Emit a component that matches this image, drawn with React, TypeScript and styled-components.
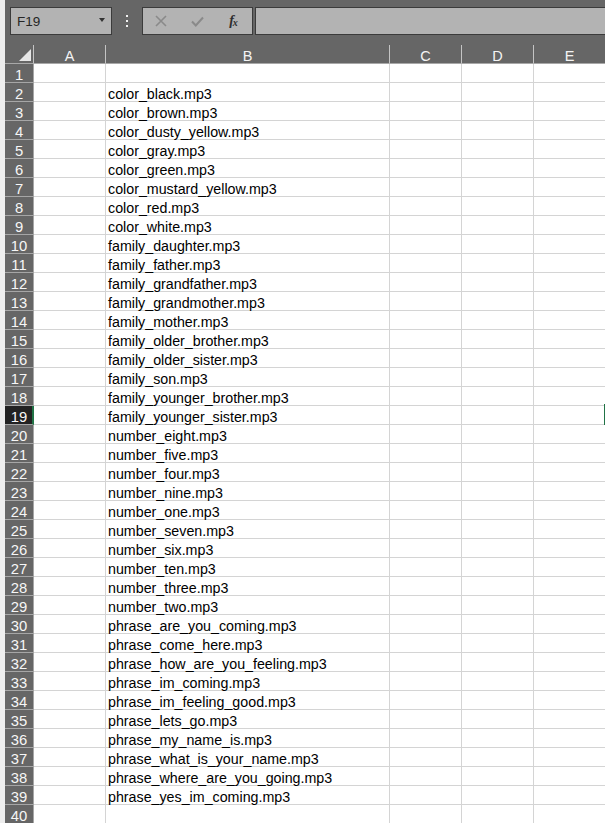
import React from "react";
import styled, { createGlobalStyle, css } from "styled-components";

const GlobalStyle = createGlobalStyle`
  html, body { margin: 0; padding: 0; background: #ffffff; }
  body { overflow: hidden; font-family: "Liberation Sans", Arial, sans-serif; }
`;

const COLS = "29px 72px 284px 72px 72px 72px";

const Root = styled.div`
  width: 605px;
  height: 823px;
  display: flex;
  overflow: hidden;
`;

const Strip = styled.div`
  width: 5px;
  flex: none;
  background: #ededed;
`;

const Main = styled.div`
  flex: 1;
  min-width: 0;
  display: flex;
  flex-direction: column;
  background: #666666;
  overflow: hidden;
`;

const Toolbar = styled.div`
  height: 45px;
  flex: none;
  box-sizing: border-box;
  padding: 7px 0 0 5px;
  display: flex;
  align-items: flex-start;
`;

const Box = styled.div`
  box-sizing: border-box;
  height: 28px;
  background: #b3b3b3;
  border: 1px solid #3b3b3b;
  flex: none;
`;

const NameBox = styled(Box)`
  width: 102px;
  display: flex;
  align-items: center;
  justify-content: space-between;
  padding: 1px 6px 0 6px;
  font-size: 13.5px;
  color: #262626;
`;

const Caret = styled.span`
  width: 0;
  height: 0;
  border-left: 3.5px solid transparent;
  border-right: 3.5px solid transparent;
  border-top: 4px solid #333333;
  margin-top: -3px;
`;

const DotsWrap = styled.div`
  width: 30px;
  height: 28px;
  display: flex;
  flex-direction: column;
  align-items: center;
  justify-content: center;
  gap: 3px;
  flex: none;
`;

const Dot = styled.span`
  width: 2px;
  height: 2px;
  background: #f0f0f0;
`;

const FxGroup = styled(Box)`
  width: 111px;
  display: flex;
  align-items: center;
`;

const FxButton = styled.div`
  width: 36px;
  height: 26px;
  display: flex;
  align-items: center;
  justify-content: center;
`;

const FxText = styled.span`
  font-family: "Liberation Serif", "Times New Roman", serif;
  font-style: italic;
  font-weight: bold;
  font-size: 14px;
  color: #2e2e2e;
  letter-spacing: -1px;
  sub {
    font-size: 10px;
    vertical-align: -1px;
  }
`;

const FormulaInput = styled(Box)`
  flex: 1;
  margin-left: 2px;
  margin-right: -4px;
`;

const GridRow = styled.div`
  display: grid;
  grid-template-columns: ${COLS};
  height: 19px;
  flex: none;
`;

const ColHead = styled.div`
  position: relative;
  box-sizing: border-box;
  height: 19px;
  border-right: 1px solid #c4c4c4;
  border-bottom: 1px solid #a8a8a8;
  color: #f4f4f4;
  font-size: 14.5px;
  line-height: 16px;
  padding-top: 3px;
  text-align: center;
`;

const CornerTri = styled.span`
  position: absolute;
  right: 2px;
  bottom: 2px;
  width: 0;
  height: 0;
  border-left: 12px solid transparent;
  border-bottom: 12px solid #e6e6e6;
`;

const Body = styled.div`
  flex: 1;
  background: #ffffff;
  display: flex;
  flex-direction: column;
`;

const RowHead = styled.div<{ $selected?: boolean }>`
  box-sizing: border-box;
  height: 19px;
  background: #666666;
  border-bottom: 1px solid #a6a6a6;
  border-right: 1px solid #a6a6a6;
  color: #f6f6f6;
  font-size: 14.8px;
  line-height: 16px;
  padding-top: 3px;
  text-align: center;
  ${(p) =>
    p.$selected &&
    css`
      background: #222222;
      border-right: 2px solid #217346;
      padding-left: 1px;
    `}
`;

const Cell = styled.div`
  position: relative;
  box-sizing: border-box;
  height: 19px;
  border-right: 1px solid #d4d4d4;
  border-bottom: 1px solid #d4d4d4;
  padding: 3px 0 0 2px;
  font-size: 14.25px;
  line-height: 16px;
  color: #000000;
  white-space: nowrap;
  background: #ffffff;
`;

/* left edge of the F19 selection frame, which lies on E19's right gridline */
const Selection = styled.span`
  position: absolute;
  right: -2px;
  top: -2px;
  bottom: -2px;
  width: 3px;
  background: #217346;
`;

const files = [
  "color_black.mp3",
  "color_brown.mp3",
  "color_dusty_yellow.mp3",
  "color_gray.mp3",
  "color_green.mp3",
  "color_mustard_yellow.mp3",
  "color_red.mp3",
  "color_white.mp3",
  "family_daughter.mp3",
  "family_father.mp3",
  "family_grandfather.mp3",
  "family_grandmother.mp3",
  "family_mother.mp3",
  "family_older_brother.mp3",
  "family_older_sister.mp3",
  "family_son.mp3",
  "family_younger_brother.mp3",
  "family_younger_sister.mp3",
  "number_eight.mp3",
  "number_five.mp3",
  "number_four.mp3",
  "number_nine.mp3",
  "number_one.mp3",
  "number_seven.mp3",
  "number_six.mp3",
  "number_ten.mp3",
  "number_three.mp3",
  "number_two.mp3",
  "phrase_are_you_coming.mp3",
  "phrase_come_here.mp3",
  "phrase_how_are_you_feeling.mp3",
  "phrase_im_coming.mp3",
  "phrase_im_feeling_good.mp3",
  "phrase_lets_go.mp3",
  "phrase_my_name_is.mp3",
  "phrase_what_is_your_name.mp3",
  "phrase_where_are_you_going.mp3",
  "phrase_yes_im_coming.mp3",
];

const SELECTED_ROW = 19;

export default function App() {
  const rows = Array.from({ length: 40 }, (_, i) => i + 1);
  return (
    <>
      <GlobalStyle />
      <Root>
        <Strip />
        <Main>
          <Toolbar>
            <NameBox>
              <span>F19</span>
              <Caret />
            </NameBox>
            <DotsWrap>
              <Dot />
              <Dot />
              <Dot />
            </DotsWrap>
            <FxGroup>
              <FxButton>
                <svg width="12" height="12" viewBox="0 0 12 12">
                  <path d="M1 1 L11 11 M11 1 L1 11" stroke="#8a8a8a" strokeWidth="1.6" fill="none" />
                </svg>
              </FxButton>
              <FxButton>
                <svg width="13" height="11" viewBox="0 0 13 11">
                  <path d="M1 5.5 L4.8 9.5 L12 1.5" stroke="#8a8a8a" strokeWidth="2" fill="none" />
                </svg>
              </FxButton>
              <FxButton>
                <FxText>
                  f<sub>x</sub>
                </FxText>
              </FxButton>
            </FxGroup>
            <FormulaInput />
          </Toolbar>
          <GridRow>
            <ColHead>
              <CornerTri />
            </ColHead>
            {["A", "B", "C", "D", "E"].map((c) => (
              <ColHead key={c}>{c}</ColHead>
            ))}
          </GridRow>
          <Body>
            {rows.map((r) => (
              <GridRow key={r}>
                <RowHead $selected={r === SELECTED_ROW}>{r}</RowHead>
                <Cell />
                <Cell>{r >= 2 ? files[r - 2] ?? "" : ""}</Cell>
                <Cell />
                <Cell />
                <Cell>{r === SELECTED_ROW && <Selection />}</Cell>
              </GridRow>
            ))}
          </Body>
        </Main>
      </Root>
    </>
  );
}
